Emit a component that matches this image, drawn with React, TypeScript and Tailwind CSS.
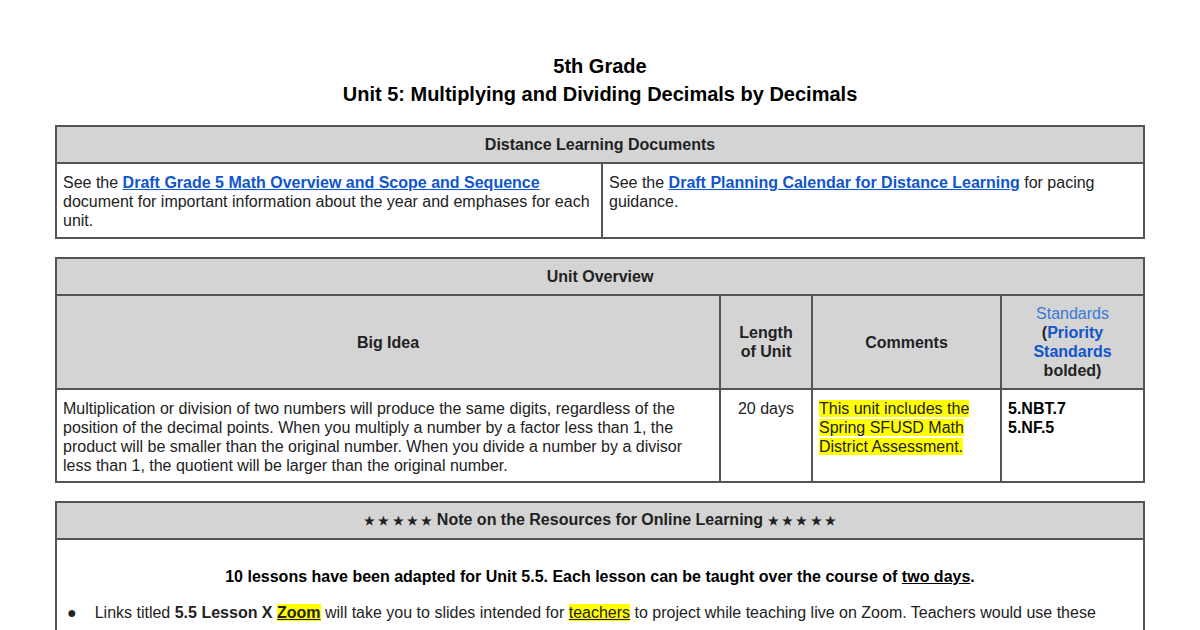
export default function App() {
  const cell = "border-2 border-[#555] px-[6px] align-top";
  const head = "border-2 border-[#555] bg-[#d4d4d4] font-bold text-center";
  const link = "text-[#1155cc] font-bold underline";
  return (
    <div className="w-[1200px] h-[630px] overflow-hidden bg-white text-[#222] text-[16px] leading-[19px]" style={{ fontFamily: '"Liberation Sans", Arial, sans-serif' }}>
      <div className="pt-[52px] text-center font-bold text-[20px] leading-[28px] text-black">
        <div>5th Grade</div>
        <div>Unit 5: Multiplying and Dividing Decimals by Decimals</div>
      </div>
      <div className="mx-[55px] mt-[17px] flex flex-col gap-[18px]">
        <table className="w-full border-collapse">
          <tbody>
            <tr><td colSpan={2} className={head + " h-[37px]"}>Distance Learning Documents</td></tr>
            <tr className="h-[75px]">
              <td className={cell + " w-[546px] pt-[9px]"}>
                See the <span className={link}>Draft Grade 5 Math Overview and Scope and Sequence</span> document for important information about the year and emphases for each unit.
              </td>
              <td className={cell + " pt-[9px]"}>
                See the <span className={link}>Draft Planning Calendar for Distance Learning</span> for pacing guidance.
              </td>
            </tr>
          </tbody>
        </table>
        <table className="w-full border-collapse">
          <tbody>
            <tr><td colSpan={4} className={head + " h-[37px]"}>Unit Overview</td></tr>
            <tr className="h-[94px]">
              <td className={head + " w-[664px]"}>Big Idea</td>
              <td className={head + " w-[92px]"}>Length<br />of Unit</td>
              <td className={head + " w-[189px]"}>Comments</td>
              <td className={head}>
                <span className="text-[#3c78d8] font-normal">Standards</span><br />
                (<span className="text-[#1155cc]">Priority<br />Standards</span><br />bolded)
              </td>
            </tr>
            <tr className="h-[93px]">
              <td className={cell + " pt-[9px]"}>
                Multiplication or division of two numbers will produce the same digits, regardless of the position of the decimal points. When you multiply a number by a factor less than 1, the product will be smaller than the original number. When you divide a number by a divisor less than 1, the quotient will be larger than the original number.
              </td>
              <td className={cell + " pt-[9px] text-center"}>20 days</td>
              <td className={cell + " pt-[9px]"}>
                <span className="bg-[#ffff00]">This unit includes the Spring SFUSD Math District Assessment.</span>
              </td>
              <td className={cell + " pt-[9px] font-bold text-black"}>5.NBT.7<br />5.NF.5</td>
            </tr>
          </tbody>
        </table>
        <table className="w-full border-collapse">
          <tbody>
            <tr><td className={head + " h-[37px]"}><span className="text-[12px]">★ ★ ★ ★ ★</span> Note on the Resources for Online Learning <span className="text-[12px]">★ ★ ★ ★ ★</span></td></tr>
            <tr>
              <td className={cell + " h-[120px] px-[10px]"}>
                <div className="text-center font-bold text-black mt-[27px]">
                  10 lessons have been adapted for Unit 5.5. Each lesson can be taught over the course of <span className="underline">two days</span>.
                </div>
                <div className="flex gap-[18px] mt-[17px] whitespace-nowrap">
                  <span>●</span>
                  <span>Links titled <b>5.5 Lesson X</b> <b className="bg-[#ffff00] underline">Zoom</b> will take you to slides intended for <span className="bg-[#ffff00] underline">teachers</span> to project while teaching live on Zoom. Teachers would use these</span>
                </div>
              </td>
            </tr>
          </tbody>
        </table>
      </div>
    </div>
  );
}
